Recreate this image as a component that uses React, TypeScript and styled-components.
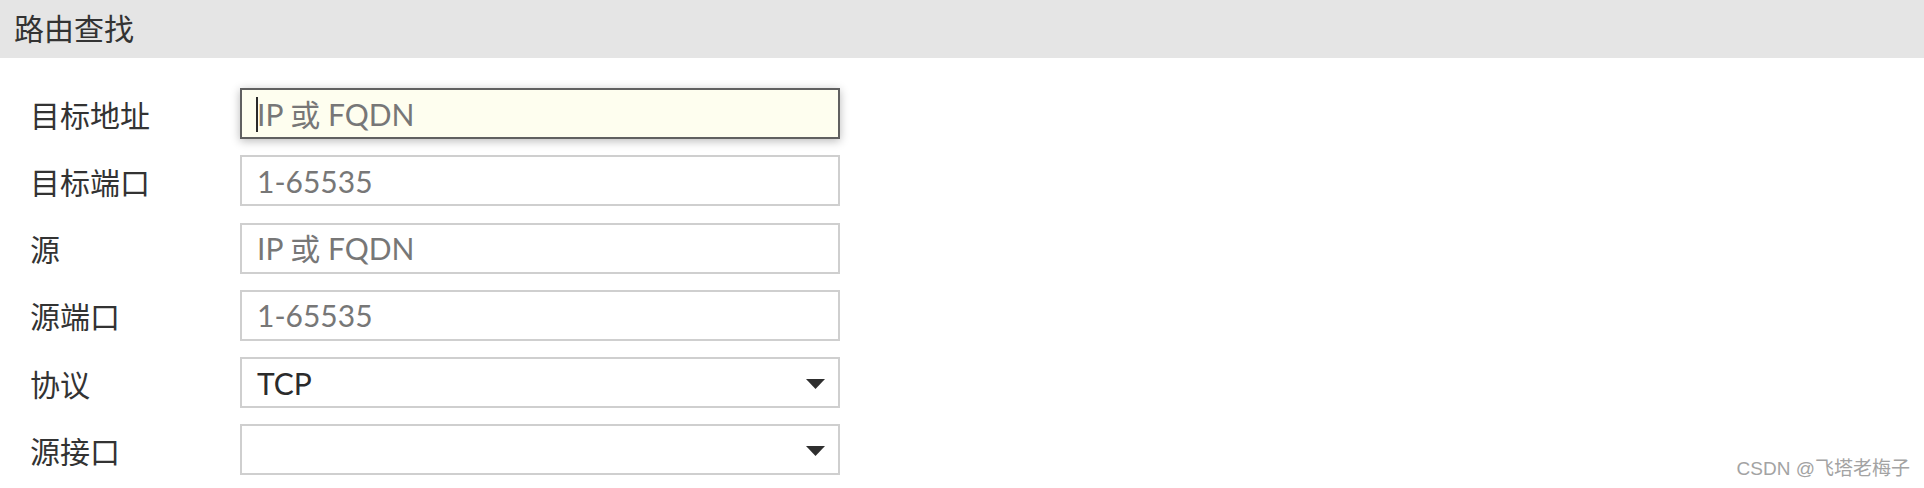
import React from "react";
import styled, { createGlobalStyle } from "styled-components";

const Global = createGlobalStyle`
  html, body, #root { margin: 0; padding: 0; height: 100%; }
  body { background: #ffffff; font-family: "Lato", "Noto Sans CJK SC", sans-serif; color: #333333; }
  * { box-sizing: border-box; }
`;

const Page = styled.div`
  position: relative;
  width: 100%;
  height: 488px;
  overflow: hidden;
  background: #ffffff;
`;

const Header = styled.div`
  height: 58px;
  background: #e5e5e5;
  display: flex;
  align-items: center;
  padding: 0 0 5px 14px;
  font-size: 30px;
  color: #333333;
  font-family: "Lato", "Noto Sans CJK SC", sans-serif;
`;

const Form = styled.div`
  display: grid;
  grid-template-columns: 210px 600px;
  row-gap: 16.3px;
  padding: 30px 0 0 30px;
`;

const Label = styled.label`
  height: 51px;
  display: flex;
  align-items: center;
  font-size: 30px;
  color: #333333;
  font-family: "Lato", "Noto Sans CJK SC", sans-serif;
`;

const FieldWrap = styled.div`
  position: relative;
  height: 51px;
`;

const TextInput = styled.input<{ $focused?: boolean }>`
  width: 100%;
  height: 51px;
  margin: 0;
  padding: 0 15px;
  font-size: 30px;
  font-family: "Lato", "Noto Sans CJK SC", sans-serif;
  color: #333333;
  outline: none;
  border: 2px solid ${(p) => (p.$focused ? "#606060" : "#cfcfcf")};
  background: ${(p) => (p.$focused ? "#fefeef" : "#ffffff")};
  box-shadow: ${(p) => (p.$focused ? "0 2px 9px rgba(0,0,0,0.28)" : "none")};
  caret-color: transparent;
  &::placeholder {
    color: #777777;
    opacity: 1;
  }
`;

const Caret = styled.span`
  position: absolute;
  left: 16px;
  top: 9px;
  width: 2px;
  height: 35px;
  background: #2a2a2a;
`;

const SelectBox = styled.div`
  height: 51px;
  border: 2px solid #cfcfcf;
  background: #ffffff;
  display: flex;
  align-items: center;
  justify-content: space-between;
  padding: 0 13px 0 15px;
  font-size: 30px;
  color: #2b2b2b;
  font-family: "Lato", "Noto Sans CJK SC", sans-serif;
`;

const Arrow = styled.svg`
  width: 19px;
  height: 10px;
  margin-top: 3px;
  flex: none;
`;

const Watermark = styled.div`
  position: absolute;
  right: 14px;
  bottom: 9px;
  font-size: 19px;
  line-height: 20px;
  color: #a3a3a3;
  font-family: "Liberation Sans", "Noto Sans CJK SC", sans-serif;
  text-shadow: 0 0 1px rgba(255,255,255,0.8);
`;

const DownTriangle = () => (
  <Arrow viewBox="0 0 19 10">
    <path d="M0 0 H19 L9.5 10 Z" fill="#2e2e2e" />
  </Arrow>
);

type Row =
  | { label: string; kind: "input"; placeholder: string; focused?: boolean }
  | { label: string; kind: "select"; value: string };

const rows: Row[] = [
  { label: "目标地址", kind: "input", placeholder: "IP 或 FQDN", focused: true },
  { label: "目标端口", kind: "input", placeholder: "1-65535" },
  { label: "源", kind: "input", placeholder: "IP 或 FQDN" },
  { label: "源端口", kind: "input", placeholder: "1-65535" },
  { label: "协议", kind: "select", value: "TCP" },
  { label: "源接口", kind: "select", value: "" },
];

export default function App() {
  return (
    <Page>
      <Global />
      <Header>路由查找</Header>
      <Form>
        {rows.map((r) => (
          <React.Fragment key={r.label}>
            <Label>{r.label}</Label>
            <FieldWrap>
              {r.kind === "input" ? (
                <>
                  <TextInput readOnly placeholder={r.placeholder} $focused={r.focused} />
                  {r.focused && <Caret />}
                </>
              ) : (
                <SelectBox role="combobox">
                  <span>{r.value}</span>
                  <DownTriangle />
                </SelectBox>
              )}
            </FieldWrap>
          </React.Fragment>
        ))}
      </Form>
      <Watermark>CSDN @飞塔老梅子</Watermark>
    </Page>
  );
}
